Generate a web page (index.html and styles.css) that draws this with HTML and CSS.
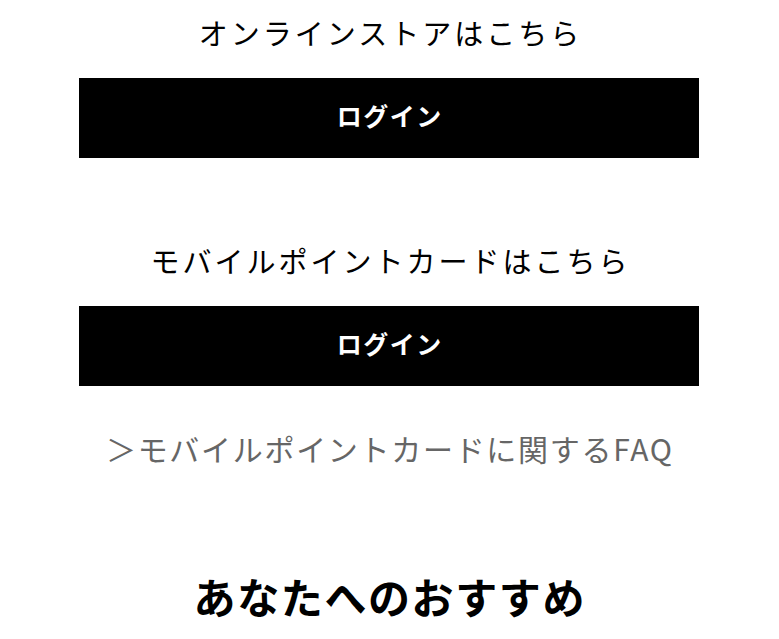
FILE: index.html
```html
<!DOCTYPE html>
<html lang="ja">
<head>
<meta charset="utf-8">
<link rel="stylesheet" href="styles.css">
</head>
<body>
<main class="page">
  <section class="login-block">
    <p class="login-title">オンラインストアはこちら</p>
    <a class="login-btn" href="#">ログイン</a>
  </section>
  <section class="login-block second">
    <p class="login-title">モバイルポイントカードはこちら</p>
    <a class="login-btn" href="#">ログイン</a>
  </section>
  <a class="faq-link" href="#">＞モバイルポイントカードに関するFAQ</a>
  <h2 class="recommend">あなたへのおすすめ</h2>
</main>
</body>
</html>
```
FILE: styles.css
```css
html, body {
  margin: 0;
  padding: 0;
  background: #fff;
}
body {
  font-family: "Noto Sans CJK JP", "Noto Sans", sans-serif;
  color: #000;
}
.page {
  display: flex;
  flex-direction: column;
  align-items: center;
  padding: 12px 1px 0 0;
}
.login-block {
  display: flex;
  flex-direction: column;
  align-items: center;
  width: 620px;
}
.login-block.second {
  margin-top: 82px;
}
.login-title {
  margin: 0;
  font-size: 29px;
  line-height: 40px;
  letter-spacing: 3px;
  padding-left: 3px;
}
.login-btn {
  display: flex;
  align-items: center;
  justify-content: center;
  margin-top: 26px;
  width: 620px;
  height: 80px;
  padding: 0 0 7px 1.5px;
  background: #000;
  color: #fff;
  text-decoration: none;
  font-weight: 700;
  font-size: 25px;
  letter-spacing: 1.5px;
  box-sizing: border-box;
}
.faq-link {
  margin-top: 42px;
  color: #666;
  text-decoration: none;
  font-size: 30px;
  line-height: 40px;
  letter-spacing: 1.7px;
  padding-left: 1.7px;
}
.recommend {
  margin: 98px 0 0;
  font-size: 42px;
  line-height: 60px;
  font-weight: 700;
  letter-spacing: 1.6px;
  padding-left: 1.6px;
}
```
